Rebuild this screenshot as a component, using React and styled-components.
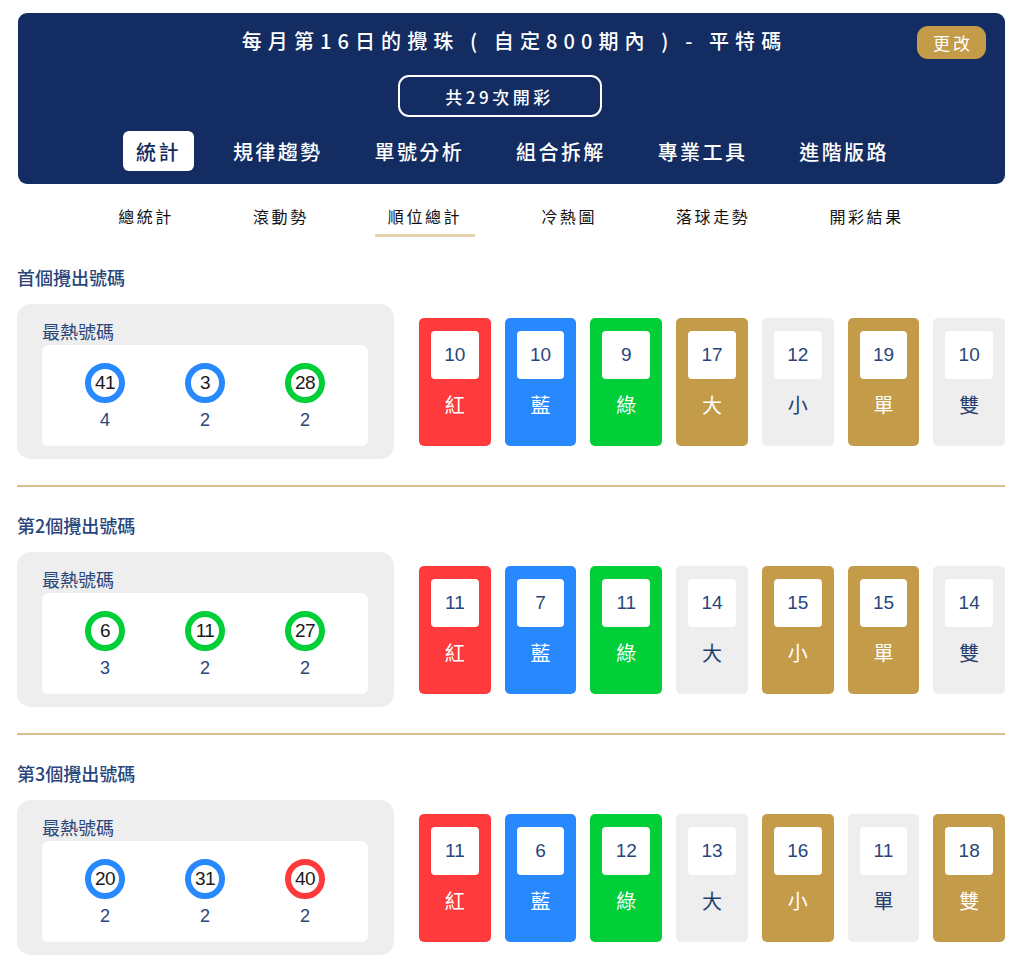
import styled, { createGlobalStyle } from 'styled-components';

const GlobalStyle = createGlobalStyle`
  body {
    margin: 0;
    background: #fff;
    font-family: "Noto Sans CJK TC", "Liberation Sans", sans-serif;
  }
`;

const COLORS = {
  red: { bg: '#fe3a3d', fg: '#fff' },
  blue: { bg: '#2889fe', fg: '#fff' },
  green: { bg: '#00cf38', fg: '#fff' },
  gold: { bg: '#c49b48', fg: '#fff' },
  grey: { bg: '#eeeeee', fg: '#243f6e' },
};

const sections = [
  {
    title: '首個攪出號碼',
    hot: [
      { n: 41, c: 'blue', count: 4 },
      { n: 3, c: 'blue', count: 2 },
      { n: 28, c: 'green', count: 2 },
    ],
    stats: [
      ['10', '紅', 'red'], ['10', '藍', 'blue'], ['9', '綠', 'green'],
      ['17', '大', 'gold'], ['12', '小', 'grey'], ['19', '單', 'gold'], ['10', '雙', 'grey'],
    ],
  },
  {
    title: '第2個攪出號碼',
    hot: [
      { n: 6, c: 'green', count: 3 },
      { n: 11, c: 'green', count: 2 },
      { n: 27, c: 'green', count: 2 },
    ],
    stats: [
      ['11', '紅', 'red'], ['7', '藍', 'blue'], ['11', '綠', 'green'],
      ['14', '大', 'grey'], ['15', '小', 'gold'], ['15', '單', 'gold'], ['14', '雙', 'grey'],
    ],
  },
  {
    title: '第3個攪出號碼',
    hot: [
      { n: 20, c: 'blue', count: 2 },
      { n: 31, c: 'blue', count: 2 },
      { n: 40, c: 'red', count: 2 },
    ],
    stats: [
      ['11', '紅', 'red'], ['6', '藍', 'blue'], ['12', '綠', 'green'],
      ['13', '大', 'grey'], ['16', '小', 'gold'], ['11', '單', 'grey'], ['18', '雙', 'gold'],
    ],
  },
];

const tabs = ['統計', '規律趨勢', '單號分析', '組合拆解', '專業工具', '進階版路'];
const subTabs = ['總統計', '滾動勢', '順位總計', '冷熱圖', '落球走勢', '開彩結果'];

export default function App() {
  return (
    <Page>
      <GlobalStyle />
      <Header>
        <TitleRow>
          <Title>每月第16日的攪珠 ( 自定800期內 ) - 平特碼</Title>
          <EditButton>更改</EditButton>
        </TitleRow>
        <CountBox>共29次開彩</CountBox>
        <Tabs>
          {tabs.map((t, i) => (
            <Tab key={t} $active={i === 0}>{t}</Tab>
          ))}
        </Tabs>
      </Header>

      <SubNav>
        {subTabs.map((t, i) => (
          <SubTab key={t} $active={i === 2}>{t}</SubTab>
        ))}
      </SubNav>

      {sections.map((s, i) => (
        <Section key={s.title} $first={i === 0}>
          <SectionTitle>{s.title}</SectionTitle>
          <SectionBody>
            <HotCard>
              <HotTitle>最熱號碼</HotTitle>
              <HotBox>
                {s.hot.map((h) => (
                  <HotItem key={h.n}>
                    <Ball $color={COLORS[h.c].bg}>{h.n}</Ball>
                    <HotCount>{h.count}</HotCount>
                  </HotItem>
                ))}
              </HotBox>
            </HotCard>
            <StatRow>
              {s.stats.map(([v, label, c]) => (
                <StatCard key={label} $bg={COLORS[c].bg} $fg={COLORS[c].fg}>
                  <StatValue>{v}</StatValue>
                  <StatLabel>{label}</StatLabel>
                </StatCard>
              ))}
            </StatRow>
          </SectionBody>
        </Section>
      ))}
    </Page>
  );
}

const Page = styled.div`
  padding: 13px 18px 0 17px;
`;

const Header = styled.div`
  background: #132c61;
  border-radius: 9px;
  margin-left: 1px;
  padding: 14px 0 13px;
  display: flex;
  flex-direction: column;
  align-items: center;
`;

const TitleRow = styled.div`
  position: relative;
  width: 100%;
  display: flex;
  justify-content: center;
`;

const Title = styled.h1`
  margin: 0;
  font-size: 20px;
  line-height: 28px;
  font-weight: 500;
  color: #fff;
  letter-spacing: 6.1px;
  padding-left: 6px;
`;

const EditButton = styled.button`
  position: absolute;
  right: 19px;
  top: -1px;
  width: 69px;
  height: 33px;
  border: none;
  border-radius: 11px;
  background: #c49b48;
  color: #fff;
  font-family: inherit;
  font-size: 17px;
  letter-spacing: 3px;
  padding: 0 0 0 3px;
`;

const CountBox = styled.div`
  margin: 20px 24px 0 0;
  width: 200px;
  height: 38px;
  border: 2px solid #fff;
  border-radius: 11px;
  color: #fff;
  font-size: 17px;
  font-weight: 500;
  letter-spacing: 3.5px;
  display: flex;
  align-items: center;
  justify-content: center;
`;

const Tabs = styled.div`
  margin-top: 14px;
  display: flex;
  gap: 26px;
  padding-left: 2px;
`;

const Tab = styled.div`
  height: 40px;
  padding: 0 13px;
  border-radius: 6px;
  display: flex;
  align-items: center;
  font-size: 20px;
  font-weight: 500;
  letter-spacing: 2.4px;
  background: ${(p) => (p.$active ? '#fff' : 'transparent')};
  color: ${(p) => (p.$active ? '#132c61' : '#fff')};
`;

const SubNav = styled.div`
  margin-top: 12px;
  display: flex;
  justify-content: center;
  gap: 53px;
`;

const SubTab = styled.div`
  padding: 8px 13px 6px;
  font-size: 16px;
  line-height: 24px;
  font-weight: 400;
  letter-spacing: 2.6px;
  color: #111;
  border-bottom: 3px solid ${(p) => (p.$active ? '#e6d3ad' : 'transparent')};
`;

const Section = styled.section`
  padding-top: ${(p) => (p.$first ? '27px' : '25px')};
  padding-bottom: 26px;
  border-bottom: 2px solid #d6c08f;
  &:last-child {
    border-bottom: none;
  }
`;

const SectionTitle = styled.h2`
  margin: 0 0 14px;
  font-size: 18px;
  line-height: 26px;
  font-weight: 500;
  color: #28467a;
`;

const SectionBody = styled.div`
  display: flex;
  align-items: center;
  gap: 25px;
`;

const HotCard = styled.div`
  width: 377px;
  flex-shrink: 0;
  box-sizing: border-box;
  background: #eeeeee;
  border-radius: 14px;
  padding: 15px 26px 13px 25px;
`;

const HotTitle = styled.div`
  font-size: 18px;
  line-height: 24px;
  font-weight: 400;
  color: #28467a;
  margin-bottom: 2px;
`;

const HotBox = styled.div`
  background: #fff;
  border-radius: 6px;
  padding: 18px 0 16px;
  display: flex;
  justify-content: center;
`;

const HotItem = styled.div`
  width: 100px;
  display: flex;
  flex-direction: column;
  align-items: center;
  gap: 7px;
`;

const Ball = styled.div`
  width: 40px;
  height: 40px;
  box-sizing: border-box;
  border-radius: 50%;
  border: 6px solid ${(p) => p.$color};
  background: #fff;
  display: flex;
  align-items: center;
  justify-content: center;
  font-family: "Liberation Sans", Arial, sans-serif;
  font-size: 19px;
  color: #1a1a1a;
  letter-spacing: -0.5px;
`;

const HotCount = styled.div`
  font-family: "Liberation Sans", Arial, sans-serif;
  font-size: 18px;
  line-height: 20px;
  color: #28467a;
`;

const StatRow = styled.div`
  flex: 1;
  display: flex;
  gap: 14px;
`;

const StatCard = styled.div`
  flex: 1;
  height: 128px;
  box-sizing: border-box;
  border-radius: 5px;
  padding: 13px 12px 0;
  background: ${(p) => p.$bg};
  color: ${(p) => p.$fg};
  display: flex;
  flex-direction: column;
  align-items: center;
`;

const StatValue = styled.div`
  width: 100%;
  height: 48px;
  background: #fff;
  border-radius: 4px;
  display: flex;
  align-items: center;
  justify-content: center;
  font-family: "Liberation Sans", Arial, sans-serif;
  font-size: 19px;
  color: #28467a;
`;

const StatLabel = styled.div`
  margin-top: 12px;
  font-size: 20px;
  line-height: 28px;
`;
